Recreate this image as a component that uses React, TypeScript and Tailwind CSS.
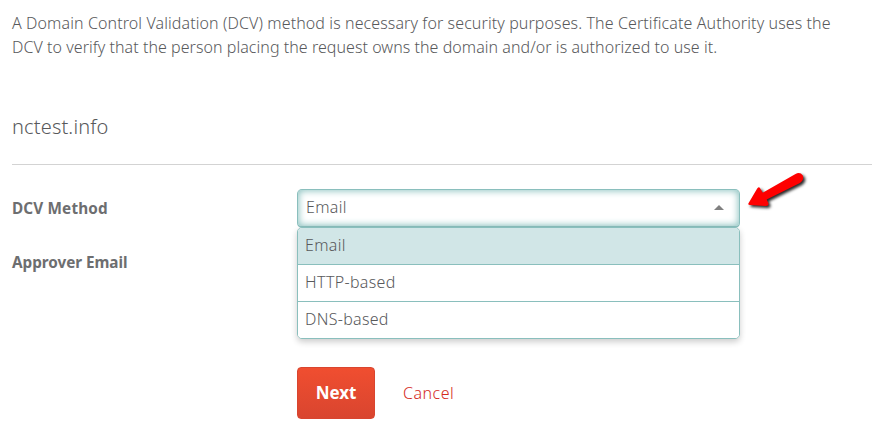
import React from 'react';

const METHODS = ['Email', 'HTTP-based', 'DNS-based'];

interface MethodSelectProps {
  value: string;
  onChange: (value: string) => void;
}

function MethodSelect({ value, onChange }: MethodSelectProps) {
  const [open, setOpen] = React.useState(true);

  return (
    <div className="relative w-[443px] shrink-0 tracking-[0.3px]">
      <button
        onClick={() => setOpen(!open)}
        className="flex h-[39px] w-full items-center justify-between rounded-[5px] border border-b-2 border-[#8abfbd] bg-white pr-[15px] pb-[2px] pl-2 shadow-[inset_0_0_7px_1px_#8fc4c2]"
      >
        <span>{value}</span>
        <svg width="10" height="5" viewBox="0 0 10 5" className="fill-[#808080]">
          <path d="M0 5 5 0l5 5z" />
        </svg>
      </button>

      {open && (
        <ul className="absolute top-[38px] left-0 w-full overflow-hidden rounded-[5px] border border-[#8abfbd] bg-white shadow-[0_3px_6px_rgba(0,0,0,0.2)]">
          {METHODS.map((method) => (
            <li
              key={method}
              onClick={() => {
                onChange(method);
                setOpen(false);
              }}
              className={`flex h-[37px] items-center border-b border-[#8abfbd] px-[7px] pb-[3px] last:h-[36px] last:border-b-0 ${
                method === value ? 'bg-[#d1e6e7]' : 'bg-white'
              }`}
            >
              {method}
            </li>
          ))}
        </ul>
      )}
    </div>
  );
}

function PointerArrow() {
  return (
    <svg
      width="64"
      height="44"
      viewBox="0 0 64 44"
      className="absolute top-[169px] left-[745px] fill-[#fe0000] drop-shadow-[2px_2px_1.5px_rgba(0,0,0,0.85)]"
    >
      <path d="M3.5 34.2 12.2 19.4Q14.3 16.8 15.4 19.7L17.7 23.8 50.5 5Q55 2.7 57.8 6.4 59.4 11.3 55 14L21.7 30.4 23.4 34Q24.3 37.2 20.3 37L5 36Q2.6 35.8 3.5 34.2Z" />
    </svg>
  );
}

export default function App() {
  const [method, setMethod] = React.useState('Email');

  return (
    <main className="relative h-[437px] w-[872px] overflow-hidden bg-white pt-[11px] pl-3 font-['Noto_Sans','Open_Sans',sans-serif] text-[16px] leading-6 font-light text-[#58595b]">
      <p>
        <span className="block tracking-[0.1px] whitespace-nowrap">
          A Domain Control Validation (DCV) method is necessary for security purposes. The Certificate Authority uses the
        </span>
        <span className="block tracking-[0.05px] whitespace-nowrap">
          DCV to verify that the person placing the request owns the domain and/or is authorized to use it.
        </span>
      </p>

      <h2 className="mt-[54px] h-[52px] border-b border-[#d3d3d3] text-[20px] leading-7 tracking-[0.15px]">
        <span>nctest.info</span>
      </h2>

      {/* Validation form */}
      <div className="mt-6 flex h-[178px] items-start">
        <div className="flex w-[285px] flex-col gap-[30px] pt-[7px] text-[15.3px] font-bold text-[#6d6e70]">
          <span className="tracking-[0.15px]">DCV Method</span>
          <span className="tracking-[-0.05px]">Approver Email</span>
        </div>
        <MethodSelect value={method} onChange={setMethod} />
      </div>

      <div className="flex items-center pl-[285px]">
        <button className="h-[52px] w-[78px] rounded-[4px] border border-[#d9452f] bg-gradient-to-b from-[#f04e30] to-[#d9452f] text-[17px] font-bold tracking-[-0.1px] text-white">
          Next
        </button>
        <a href="#" className="ml-7 tracking-[0.5px] text-[#d52b1c]">
          Cancel
        </a>
      </div>

      <PointerArrow />
    </main>
  );
}
